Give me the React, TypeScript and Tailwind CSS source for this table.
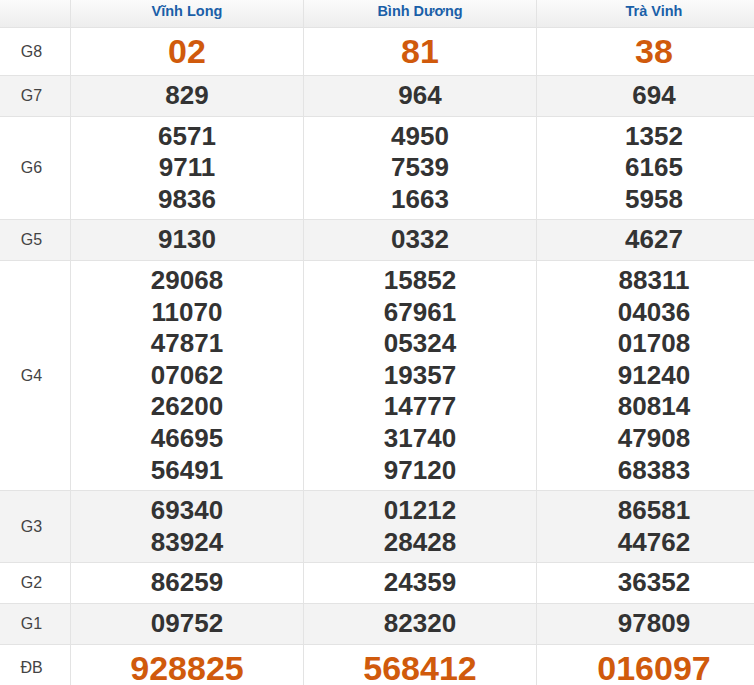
import React from "react";

type Row = { label: string; values: string[][]; big?: boolean };

const provinces = ["Vĩnh Long", "Bình Dương", "Trà Vinh"];

const rows: Row[] = [
  { label: "G8", values: [["02"], ["81"], ["38"]], big: true },
  { label: "G7", values: [["829"], ["964"], ["694"]] },
  { label: "G6", values: [["6571", "9711", "9836"], ["4950", "7539", "1663"], ["1352", "6165", "5958"]] },
  { label: "G5", values: [["9130"], ["0332"], ["4627"]] },
  {
    label: "G4",
    values: [
      ["29068", "11070", "47871", "07062", "26200", "46695", "56491"],
      ["15852", "67961", "05324", "19357", "14777", "31740", "97120"],
      ["88311", "04036", "01708", "91240", "80814", "47908", "68383"],
    ],
  },
  { label: "G3", values: [["69340", "83924"], ["01212", "28428"], ["86581", "44762"]] },
  { label: "G2", values: [["86259"], ["24359"], ["36352"]] },
  { label: "G1", values: [["09752"], ["82320"], ["97809"]] },
  { label: "ĐB", values: [["928825"], ["568412"], ["016097"]], big: true },
];

export default function App() {
  return (
    <div
      className="w-[754px] h-[685px] overflow-hidden bg-white"
      style={{ fontFamily: '"Liberation Sans", Arial, sans-serif' }}
    >
      <div className="w-[771px]">
        {/* header */}
        <div className="flex h-[28px] border-b border-[#e3e3e3] bg-gradient-to-b from-[#fbfbfb] to-[#ededed]">
          <div className="w-[71px] shrink-0 border-r border-[#e3e3e3]" />
          {provinces.map((p, i) => (
            <div
              key={p}
              className={`${i === 2 ? "w-[234px]" : "w-[233px] border-r border-[#e3e3e3]"} shrink-0 text-center text-[14.5px] font-bold text-[#1a5fa8] leading-[22px]`}
            >
              {p}
            </div>
          ))}
        </div>
        {rows.map((r, idx) => (
          <div
            key={r.label}
            className={`flex border-b border-[#e3e3e3] ${idx % 2 === 1 ? "bg-[#f3f3f3]" : "bg-white"}`}
          >
            <div className="w-[71px] shrink-0 border-r border-[#e3e3e3] flex items-center justify-center pr-[7px] text-[16px] text-[#444]">
              {r.label}
            </div>
            {r.values.map((vals, i) => (
              <div
                key={i}
                className={`${i === 2 ? "w-[234px]" : "w-[233px] border-r border-[#e3e3e3]"} shrink-0 flex flex-col items-center justify-center py-[4px]`}
              >
                {vals.map((v, j) => (
                  <div
                    key={j}
                    className={
                      r.big
                        ? "text-[34px] leading-[39px] font-bold text-[#d05a0c]"
                        : "text-[26px] leading-[31.6px] font-bold text-[#333]"
                    }
                  >
                    {v}
                  </div>
                ))}
              </div>
            ))}
          </div>
        ))}
      </div>
    </div>
  );
}
